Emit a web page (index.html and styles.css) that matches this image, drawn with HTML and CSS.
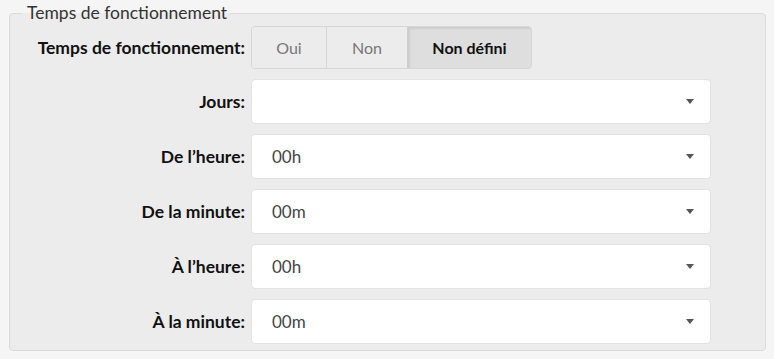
FILE: index.html
```html
<!DOCTYPE html>
<html lang="fr">
<head>
<meta charset="utf-8">
<link rel="stylesheet" href="styles.css">
</head>
<body>
<div class="page">
  <fieldset class="box">
    <legend class="box-legend">Temps de fonctionnement</legend>
    <div class="form">
      <div class="row row-first">
        <label class="lbl">Temps de fonctionnement:</label>
        <div class="btn-group">
          <button class="btn btn-oui">Oui</button>
          <button class="btn btn-non">Non</button>
          <button class="btn btn-active">Non défini</button>
        </div>
      </div>
      <div class="row">
        <label class="lbl">Jours:</label>
        <div class="select"><span class="val"></span><span class="caret"></span></div>
      </div>
      <div class="row">
        <label class="lbl">De l’heure:</label>
        <div class="select"><span class="val">00h</span><span class="caret"></span></div>
      </div>
      <div class="row">
        <label class="lbl">De la minute:</label>
        <div class="select"><span class="val">00m</span><span class="caret"></span></div>
      </div>
      <div class="row">
        <label class="lbl">À l’heure:</label>
        <div class="select"><span class="val">00h</span><span class="caret"></span></div>
      </div>
      <div class="row">
        <label class="lbl">À la minute:</label>
        <div class="select"><span class="val">00m</span><span class="caret"></span></div>
      </div>
    </div>
  </fieldset>
</div>
</body>
</html>
```
FILE: styles.css
```css
html, body {
  margin: 0;
  padding: 0;
  background: #f5f5f5;
}
body {
  font-family: Lato, "Noto Sans", sans-serif;
  color: #222;
}
.page {
  padding: 3px 8px 0 9px;
}
.box {
  margin: 0;
  padding: 3px 0 6px 0;
  border: 1px solid #dcdcdc;
  border-radius: 4px;
  background: #ececec;
  min-inline-size: 0;
}
.box-legend {
  margin-left: 12px;
  padding: 0 3px 0 5px;
  font-size: 17.5px;
  line-height: 20px;
  color: #333;
}
.form {
  display: flex;
  flex-direction: column;
  gap: 10px;
}
.row {
  display: grid;
  grid-template-columns: 235px 460px;
  column-gap: 6px;
  align-items: center;
}
.lbl {
  text-align: right;
  font-weight: bold;
  font-size: 17.5px;
  color: #111;
}
.btn-group {
  display: flex;
  height: 43px;
  width: 281px;
  border: 1px solid #d6d6d6;
  border-radius: 4px;
  overflow: hidden;
  box-sizing: border-box;
}
.btn {
  font-family: inherit;
  font-size: 16px;
  border: 0;
  margin: 0;
  background: #ececec;
  color: #777;
  padding: 0;
}
.btn-oui { width: 75px; border-right: 1px solid #d6d6d6; }
.btn-non { width: 81px; border-right: 1px solid #cfcfcf; }
.btn-active {
  flex: 1;
  background: #dedede;
  color: #111;
  font-weight: bold;
  box-shadow: inset 2px 2px 2px rgba(0,0,0,0.08);
}
.select {
  height: 45px;
  box-sizing: border-box;
  background: #fff;
  border: 1px solid #e2e2e2;
  border-radius: 4px;
  display: flex;
  align-items: center;
  justify-content: space-between;
  padding: 0 16px 0 20px;
}
.val {
  font-size: 17px;
  color: #444;
}
.caret {
  width: 0;
  height: 0;
  border-left: 4px solid transparent;
  border-right: 4px solid transparent;
  border-top: 5px solid #555;
}
```
